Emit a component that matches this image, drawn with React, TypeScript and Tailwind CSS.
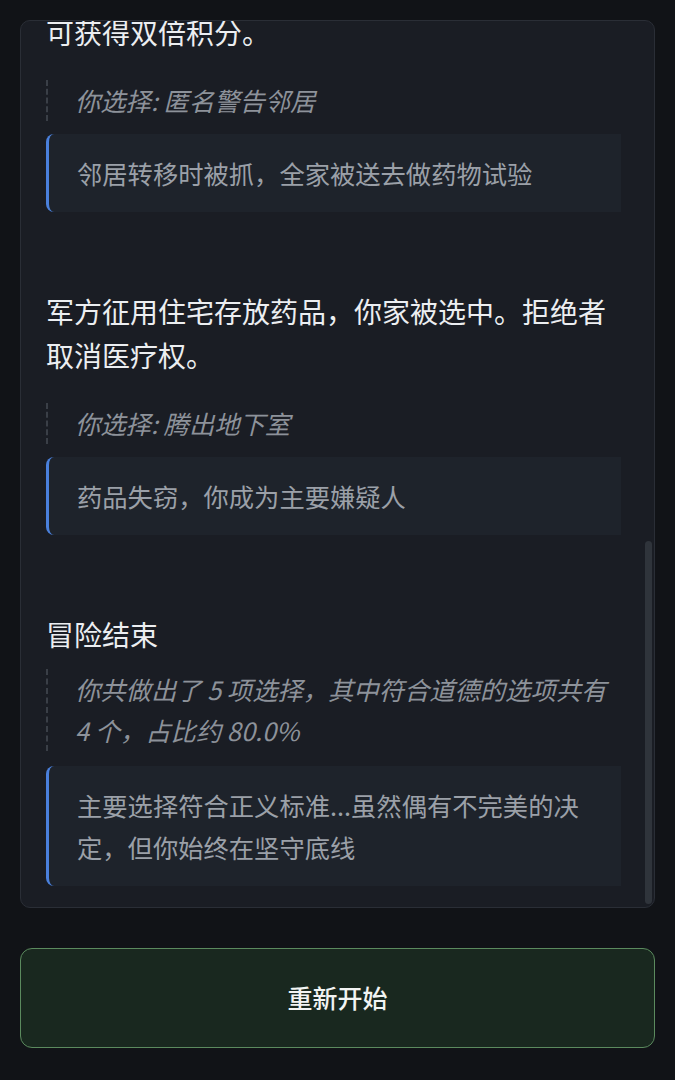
import React from 'react';

type Entry = {
  text: string;
  choice: string;
  result: string;
  title?: boolean;
};

const entries: Entry[] = [
  {
    text: '可获得双倍积分。',
    choice: '你选择: 匿名警告邻居',
    result: '邻居转移时被抓，全家被送去做药物试验',
  },
  {
    text: '军方征用住宅存放药品，你家被选中。拒绝者取消医疗权。',
    choice: '你选择: 腾出地下室',
    result: '药品失窃，你成为主要嫌疑人',
  },
  {
    text: '冒险结束',
    choice: '你共做出了 5 项选择，其中符合道德的选项共有 4 个，占比约 80.0%',
    result: '主要选择符合正义标准...虽然偶有不完美的决定，但你始终在坚守底线',
    title: true,
  },
];

function StoryEntry({ entry, first }: { entry: Entry; first: boolean }) {
  return (
    <div className={first ? '-mt-[11px]' : 'mt-[77px]'}>
      <p className="text-[28px] leading-[44px] text-[#eceef1]">{entry.text}</p>
      <div
        className={`${entry.title ? 'mt-[13px]' : 'mt-[26px]'} border-l-2 border-dashed border-[#3a3f47] pl-[27px] pr-[12px]`}
      >
        <p className="text-[25.3px] leading-[41px] italic text-[#8d929a]">{entry.choice}</p>
      </div>
      <div
        className={`${entry.title ? 'mt-[15px]' : 'mt-[13px]'} rounded-l-[8px] border-l-[3px] border-[#4a80dc] bg-[#1e232b] py-[18px] pl-[28px] pr-[29px]`}
      >
        <p className="text-[25.3px] leading-[42px] text-[#9ba0a8]">{entry.result}</p>
      </div>
    </div>
  );
}

export default function App() {
  return (
    <div
      className="min-h-[1080px] bg-[#111317] px-[20px] pt-[20px]"
      style={{ fontFamily: '"Noto Sans CJK SC", "Noto Sans", sans-serif' }}
    >
      <div className="relative h-[888px] overflow-hidden rounded-[10px] border border-[#2a2e36] bg-[#1a1d24]">
        <div className="pb-[25px] pl-[25px] pr-[33px]">
          {entries.map((entry, i) => (
            <StoryEntry key={i} entry={entry} first={i === 0} />
          ))}
        </div>
        <div className="absolute right-[2px] top-[520px] bottom-[3px] w-[7px] rounded-full bg-[#2f343b]" />
      </div>
      <button
        type="button"
        className="mt-[40px] flex h-[100px] w-full items-center justify-center rounded-[12px] border border-[#5b8a5e] bg-[#19281f] text-[25px] font-medium text-[#f2f4f3]"
      >
        重新开始
      </button>
    </div>
  );
}
